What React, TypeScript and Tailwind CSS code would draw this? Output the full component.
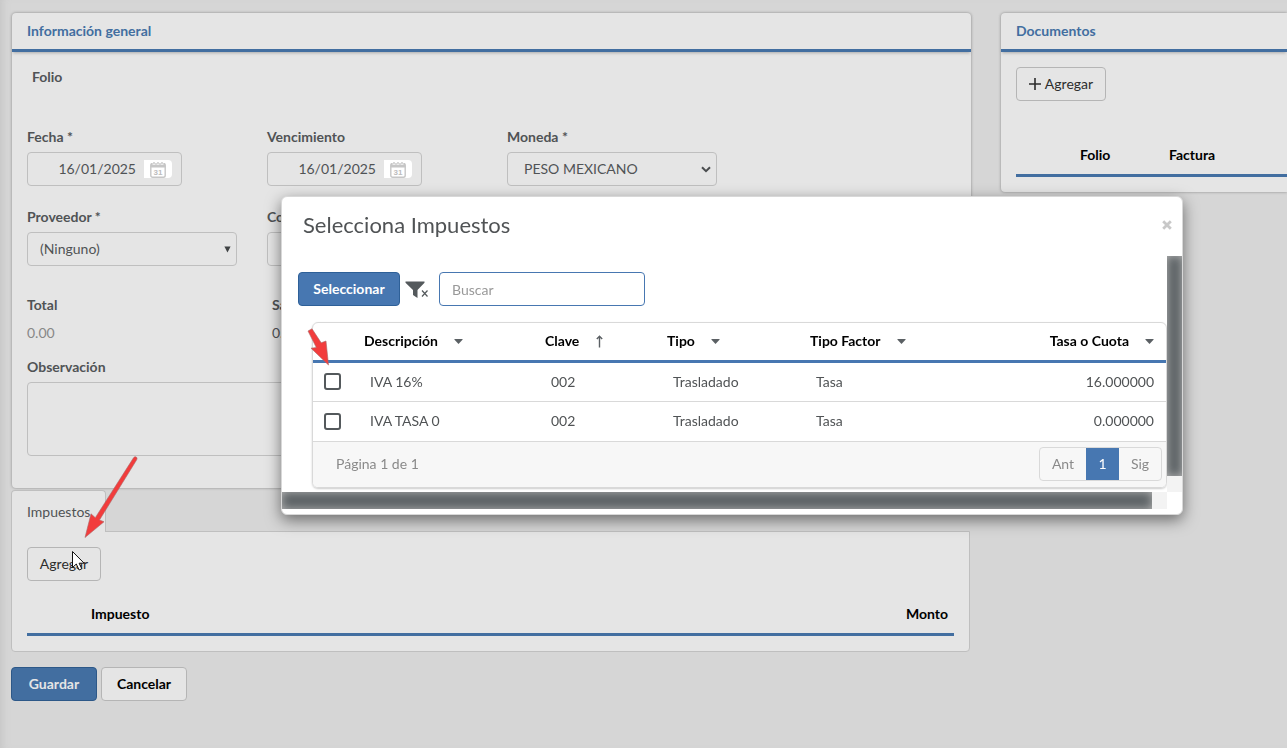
import React, { useState } from 'react';

const taxes = [
  { id: 1, descripcion: 'IVA 16%', clave: '002', tipo: 'Trasladado', factor: 'Tasa', tasa: '16.000000' },
  { id: 2, descripcion: 'IVA TASA 0', clave: '002', tipo: 'Trasladado', factor: 'Tasa', tasa: '0.000000' },
];

const labelClass = 'block h-5 font-bold leading-5';
const fieldClass = 'h-[34px] rounded border border-[#bfbfbf] bg-[#e5e5e5]';
const buttonClass = 'h-[34px] rounded border border-[#b5b5b5] bg-[#e5e5e5] text-[#2d2d2d]';

const CalendarIcon = () => (
  <svg className="h-[18px] w-4" viewBox="0 0 16 18" fill="none">
    <rect x=".8" y="4" width="14.4" height="13.2" rx="1.8" fill="#fff" stroke="#c6c6c6" strokeWidth="1.4" />
    <path d="M.5 4q0-1 1-1h13q1 0 1 1v3.5H.5z" fill="#c6c6c6" />
    <path d="M4 1.5v3.5M8 1.5v3.5M12 1.5v3.5" stroke="#fff" strokeWidth="2.6" />
    <path d="M4 2v2.5M8 2v2.5M12 2v2.5" stroke="#c6c6c6" strokeWidth="1.4" />
    <text x="8" y="15.4" textAnchor="middle" fontSize="8" fontWeight="bold" fontFamily="Liberation Sans" fill="#bcbcbc">
      31
    </text>
  </svg>
);

const DateField: React.FC<{ id: string; label: string }> = ({ id, label }) => {
  const [value, setValue] = useState('16/01/2025');
  return (
    <div>
      <label htmlFor={id} className={labelClass}>{label}</label>
      <div className={`mt-[5px] flex w-[155px] items-center pr-[9px] ${fieldClass}`}>
        <input
          id={id}
          value={value}
          onChange={(e) => setValue(e.target.value)}
          className="min-w-0 flex-1 bg-transparent pr-2 text-right outline-none"
        />
        <button type="button" aria-label="Abrir calendario" className="flex h-[18px] w-7 items-center justify-center rounded-r bg-white">
          <CalendarIcon />
        </button>
      </div>
    </div>
  );
};

const SelectField: React.FC<{ id: string; label: string; option: string; chevron?: boolean }> = ({ id, label, option, chevron }) => (
  <div>
    <label htmlFor={id} className={labelClass}>{label}</label>
    <div className="relative mt-[5px] w-[210px]">
      <select
        id={id}
        className={`w-full appearance-none outline-none ${chevron ? 'pl-4' : 'pl-3'} ${fieldClass}`}
      >
        <option>{option}</option>
      </select>
      {chevron ? (
        <svg className="pointer-events-none absolute top-[14px] right-[6px] h-[7px] w-[10px]" viewBox="0 0 10 7" fill="none">
          <path d="M1 1.2l4 4 4-4" stroke="#4a4d4f" strokeWidth="2" />
        </svg>
      ) : (
        <svg className="pointer-events-none absolute top-[14px] right-[6px] h-[7px] w-[7px]" viewBox="0 0 7 7">
          <path d="M.4 .4h6.2L3.5 6.6z" fill="#3f4244" />
        </svg>
      )}
    </div>
  </div>
);

const SortHeader: React.FC<{ title: string; up?: boolean; right?: boolean }> = ({ title, up, right }) => (
  <th scope="col" className={right ? 'pr-3' : 'pl-[6px]'}>
    <button type="button" className={`flex w-full items-center gap-4 font-bold text-black ${right ? 'justify-end' : ''}`}>
      {title}
      {up ? (
        <svg className="h-[13px] w-[9px]" viewBox="0 0 9 13" fill="none">
          <path d="M4.5 12.5V1.2M1.8 4l2.7-2.8L7.2 4" stroke="#5b6064" strokeWidth="1.4" />
        </svg>
      ) : (
        <svg className="h-[5px] w-[9px]" viewBox="0 0 9 5">
          <path d="M.5 0h8v.8L4.5 5 .5 .8z" fill="#5b6064" />
        </svg>
      )}
    </button>
  </th>
);

const CardHeader: React.FC<{ title: string }> = ({ title }) => (
  <h2 className="border-b-3 border-[#426ea0] px-[15px] py-2 font-bold leading-5 text-[#426ea0] shadow-[0_2px_3px_-1px_#aaa]">
    {title}
  </h2>
);

const TaxDialog = () => {
  const [selected, setSelected] = useState<number[]>([]);

  const toggle = (id: number) => {
    setSelected(selected.includes(id) ? selected.filter((s) => s !== id) : [...selected, id]);
  };

  return (
    <div className="fixed inset-0 z-20 flex items-start pt-[196px] pr-[104px] pl-[281px]">
      <div
        role="dialog"
        aria-labelledby="dialog-title"
        className="w-full rounded-md border border-[#d8d8d8] bg-white pb-[5px] shadow-[0_5px_15px_rgba(0,0,0,0.5)]"
      >
        <div className="mb-[3px] flex h-14 items-center justify-between pr-[10px] pl-[21px]">
          <h1 id="dialog-title" className="text-[22px] leading-7">Selecciona Impuestos</h1>
          <button type="button" aria-label="Cerrar">
            <svg className="h-[10px] w-[10px]" viewBox="0 0 10 10">
              <path d="M1.2 1.2l7.6 7.6M8.8 1.2L1.2 8.8" stroke="#c8c8c8" strokeWidth="2.8" />
            </svg>
          </button>
        </div>

        <div className="grid grid-cols-[minmax(0,1fr)_15px]">
          <div className="pt-4 pb-1 pl-4">
            <div className="flex items-center">
              <button type="button" className="h-[34px] w-[102px] rounded border border-[#2e6098] bg-[#4777b1] font-bold text-white">
                Seleccionar
              </button>
              <button type="button" aria-label="Quitar filtros" className="ml-[5px] mr-[10px]">
                <svg className="h-[20px] w-6" viewBox="0 0 24 20" fill="none">
                  <path d="M.5 2.5h19v1.3l-7 7.2v8L8 16v-5L.5 3.8z" fill="#54595c" />
                  <path d="M17 11.5l5.5 6M22.5 11.5l-5.5 6" stroke="#fff" strokeWidth="3" />
                  <path d="M17 11.5l5.5 6M22.5 11.5l-5.5 6" stroke="#54595c" strokeWidth="1.2" />
                </svg>
              </button>
              <input
                aria-label="Buscar"
                placeholder="Buscar"
                className="h-[34px] w-[206px] rounded border border-[#4777b1] px-3 outline-none placeholder:text-[#999]"
              />
            </div>

            <div className="mt-4 ml-[14px] overflow-hidden rounded-md border border-[#d9d9d9] shadow-[0_1px_2px_#ccc]">
              <table className="w-full table-fixed text-left">
                <colgroup>
                  <col className="w-[45px]" />
                  <col className="w-[181px]" />
                  <col className="w-[122px]" />
                  <col className="w-[143px]" />
                  <col className="w-[180px]" />
                  <col />
                </colgroup>
                <thead>
                  <tr className="h-[38px] border-b-3 border-[#4777b1]">
                    <td />
                    <SortHeader title="Descripción" />
                    <SortHeader title="Clave" up />
                    <SortHeader title="Tipo" />
                    <SortHeader title="Tipo Factor" />
                    <SortHeader title="Tasa o Cuota" right />
                  </tr>
                </thead>
                <tbody>
                  {taxes.map((tax) => (
                    <tr key={tax.id} className="h-10 border-b border-[#d9d9d9]">
                      <td className="pl-[11px]">
                        <input
                          type="checkbox"
                          aria-label={tax.descripcion}
                          checked={selected.includes(tax.id)}
                          onChange={() => toggle(tax.id)}
                          className="block h-[17px] w-[17px] appearance-none rounded-[3px] border-2 border-[#54595c] bg-white checked:bg-[#54595c]"
                        />
                      </td>
                      <td className="pl-3">{tax.descripcion}</td>
                      <td className="pl-3">{tax.clave}</td>
                      <td className="pl-3">{tax.tipo}</td>
                      <td className="pl-3">{tax.factor}</td>
                      <td className="pr-3 text-right">{tax.tasa}</td>
                    </tr>
                  ))}
                </tbody>
              </table>
              <div className="flex items-center justify-between bg-[#f7f7f7] pt-[5px] pr-1 pb-[6px] pl-[23px] text-[#8a8a8a]">
                <span>Página 1 de 1</span>
                <div className="flex h-[34px] overflow-hidden rounded border border-[#d9d9d9]">
                  <button type="button" className="w-[46px]">Ant</button>
                  <button type="button" className="w-[33px] bg-[#4777b1] text-white">1</button>
                  <button type="button" className="w-[42px]">Sig</button>
                </div>
              </div>
            </div>
          </div>

          {/* scroll tracks */}
          <div className="bg-[#f3f3f3] pb-4">
            <div className="h-full bg-[#5d6366] shadow-[inset_0_0_10px_#b4b4b4]" />
          </div>
          <div className="h-[17px] bg-[#f3f3f3] pr-[15px]">
            <div className="h-full bg-[#5d6366] shadow-[inset_0_0_10px_#b4b4b4]" />
          </div>
        </div>
      </div>
    </div>
  );
};

export default function App() {
  return (
    <div className="relative min-h-screen overflow-hidden bg-[#d6d6d6] pt-[13px] pl-3 font-['Lato',sans-serif] text-[14px] leading-5 text-[#505355] shadow-[inset_8px_0_8px_-6px_#c4c4c4]">
      <div className="grid grid-cols-[minmax(0,1fr)_286px] items-start gap-[30px]">
        <div>
          <section className="rounded bg-[#e5e5e5] shadow-[0_0_3px_#888]">
            <CardHeader title="Información general" />
            <div className="px-[15px] pt-[15px] pb-8">
              <p className="pl-[5px] font-bold">Folio</p>

              <div className="mt-10 grid grid-cols-[240px_240px_210px] gap-y-[21px]">
                <DateField id="fecha" label="Fecha *" />
                <DateField id="vencimiento" label="Vencimiento" />
                <SelectField id="moneda" label="Moneda *" option="PESO MEXICANO" chevron />
                <SelectField id="proveedor" label="Proveedor *" option="(Ninguno)" />
                <div>
                  <label htmlFor="concepto" className={labelClass}>Concepto</label>
                  <input id="concepto" className={`mt-[5px] w-[210px] px-3 outline-none ${fieldClass}`} />
                </div>
              </div>

              <div className="mt-[29px] grid grid-cols-[240px_240px]">
                <div>
                  <p className="font-bold">Total</p>
                  <p className="mt-2 text-[#888]">0.00</p>
                </div>
                <div className="pl-[5px]">
                  <p className="font-bold">Saldo</p>
                  <p className="mt-2">0.00</p>
                </div>
              </div>

              <label htmlFor="observacion" className={`mt-[14px] ${labelClass}`}>Observación</label>
              <textarea
                id="observacion"
                className="mt-[5px] block h-[74px] w-full resize-none rounded border border-[#bfbfbf] bg-[#e5e5e5] p-3 outline-none"
              />
            </div>
          </section>

          <section className="-ml-px mr-px mt-[2px]">
            <div className="relative -mb-px flex">
              <button type="button" className="h-[42px] w-[95px] rounded-t border border-b-0 border-[#bfbfbf] bg-[#e5e5e5] pl-[15px] text-left">
                Impuestos
              </button>
            </div>
            <div className="rounded-b border border-[#bfbfbf] bg-[#e5e5e5] p-[15px]">
              <button type="button" className={`w-[74px] ${buttonClass}`}>Agregar</button>
              <table className="mt-[15px] w-full text-black">
                <thead>
                  <tr className="h-[38px] border-b-3 border-[#426ea0]">
                    <th scope="col" className="pl-16 text-left">Impuesto</th>
                    <th scope="col" className="pr-[6px] text-right">Monto</th>
                  </tr>
                </thead>
              </table>
            </div>
          </section>

          <div className="-ml-px mt-[15px] flex gap-1">
            <button type="button" className="h-[34px] w-[86px] rounded border border-[#2d5888] bg-[#426ea0] font-bold text-[#e5e5e5]">
              Guardar
            </button>
            <button type="button" className="h-[34px] w-[86px] rounded border border-[#b5b5b5] bg-[#e5e5e5] font-bold text-black">
              Cancelar
            </button>
          </div>
        </div>

        <section className="rounded-l bg-[#e5e5e5] shadow-[0_0_3px_#888]">
          <CardHeader title="Documentos" />
          <div className="py-[15px] pl-[15px]">
            <button type="button" className={`flex w-[90px] items-center justify-center gap-1 ${buttonClass}`}>
              <svg className="h-3 w-3" viewBox="0 0 12 12">
                <path d="M6 0v12M0 6h12" stroke="#2d2d2d" strokeWidth="1.6" />
              </svg>
              Agregar
            </button>
            <table className="mt-9 w-full table-fixed text-left text-black">
              <thead>
                <tr className="h-[38px] border-b-3 border-[#426ea0]">
                  <th scope="col" className="w-[153px] pl-16">Folio</th>
                  <th scope="col">Factura</th>
                </tr>
              </thead>
            </table>
          </div>
        </section>
      </div>

      <TaxDialog />

      {/* pointers drawn over the form */}
      <svg className="pointer-events-none absolute top-[456px] left-[82px] z-30 h-[84px] w-[57px]" viewBox="82 456 57 84">
        <path d="M133.5 457.8q1.3-1.8 2.8-.8 1.4 1 .4 2.8L99.5 520l4.5 1.8L85 537.5 91 513.8l4.3 3.9z" fill="#f23c3c" stroke="#a86a6a" strokeWidth=".6" />
      </svg>
      <svg className="pointer-events-none absolute top-[326px] left-[306px] z-30 h-[42px] w-[26px]" viewBox="306 326 26 42">
        <path d="M308 331l4-2.2 9.2 14 4.8-1.8L328.5 365 311 348.2l5.3-.7z" fill="#f23c3c" stroke="#a86a6a" strokeWidth=".6" />
      </svg>
      <svg className="pointer-events-none absolute top-[550px] left-[71px] z-30 h-[22px] w-[15px]" viewBox="0 0 15 22">
        <path d="M1.5 1.5v16l3.8-3.5 2.8 6 2.7-1.2-2.7-5.6h5z" fill="#fff" stroke="#111" />
      </svg>
    </div>
  );
}
